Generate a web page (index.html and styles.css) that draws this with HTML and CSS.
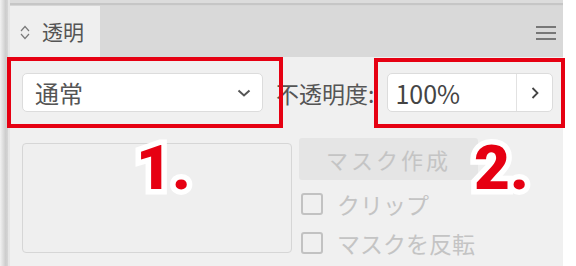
FILE: index.html
```html
<!DOCTYPE html>
<html lang="ja">
<head>
    <meta charset="UTF-8">
    <title>透明パネル</title>
    <link rel="stylesheet" href="styles.css">
</head>
<body>
    <div class="window">
        <div class="edge"></div>
        <div class="panel">
            <div class="topline"></div>
            <div class="tabbar">
                <div class="tab">
                    <svg class="tab-icon" width="10" height="15" viewBox="0 0 10 15">
                        <path d="M1 6 L5 1.5 L9 6" fill="none" stroke="#7a7a7a" stroke-width="1.2"/>
                        <path d="M1 9 L5 13.5 L9 9" fill="none" stroke="#7a7a7a" stroke-width="1.2"/>
                    </svg>
                    <span class="tab-title">透明</span>
                </div>
                <div class="menu">
                    <span></span><span></span><span></span>
                </div>
            </div>

            <div class="content">
                <div class="row-top">
                    <div class="select">
                        <span>通常</span>
                        <svg width="14" height="8" viewBox="0 0 14 8">
                            <path d="M1.5 1.5 L7 6.5 L12.5 1.5" fill="none" stroke="#555" stroke-width="2"/>
                        </svg>
                    </div>
                    <div class="label">不透明度:</div>
                    <div class="field">
                        <span class="value">100%</span>
                        <span class="step">
                            <svg width="8" height="12" viewBox="0 0 8 12">
                                <path d="M1.5 1 L6.5 6 L1.5 11" fill="none" stroke="#444" stroke-width="1.8"/>
                            </svg>
                        </span>
                    </div>
                </div>

                <div class="row-mask">
                    <div class="thumb"></div>
                    <div class="mask-col">
                        <div class="mask-btn">マスク作成</div>
                        <div class="check"><span class="box"></span>クリップ</div>
                        <div class="check"><span class="box"></span>マスクを反転</div>
                    </div>
                </div>
            </div>
        </div>

        <!-- annotations -->
        <div class="mark mark-1"></div>
        <div class="mark mark-2"></div>
        <div class="callout callout-1"><span class="outline">1.</span><span class="fill">1.</span></div>
        <div class="callout callout-2"><span class="outline">2.</span><span class="fill">2.</span></div>
    </div>
</body>
</html>
```

FILE: styles.css
```css
body {
    margin: 0;
    background: #ffffff;
    font-family: "Noto Sans CJK JP", "Noto Sans", sans-serif;
}

.window {
    position: relative;
    display: flex;
    width: 563px;
    height: 266px;
    overflow: visible;
}

.edge {
    width: 8px;
    background: linear-gradient(to right, #f2f2f2 0, #e2e2e2 30%, #cdcdcd 70%, #d6d6d6 100%);
}

.panel {
    flex: 1;
    display: flex;
    flex-direction: column;
    background: #f0f0f0;
    border-left: 2px solid #e6e6e6;
}

.topline {
    height: 6px;
    background: linear-gradient(to bottom, #dcdcdc 0, #dcdcdc 3px, #c6c6c6 3px, #c6c6c6 5px, #d6d6d6 5px);
}

.tabbar {
    height: 51px;
    display: flex;
    align-items: center;
    background: #d9d9d9;
}

.tab {
    align-self: stretch;
    width: 90px;
    display: flex;
    align-items: center;
    gap: 12px;
    padding-left: 10px;
    box-sizing: border-box;
    background: #efefef;
}

.tab-icon {
    margin-top: 2px;
}

.tab-title {
    font-size: 21px;
    color: #555;
    line-height: 1;
}

.menu {
    margin-left: auto;
    margin-right: 7px;
    display: flex;
    flex-direction: column;
    gap: 4px;
    margin-top: 2px;
}

.menu span {
    display: block;
    width: 20px;
    height: 2px;
    background: #777;
}

.content {
    padding: 16px 6px 0 12px;
}

.row-top {
    display: flex;
    align-items: center;
    height: 39px;
}

.select {
    width: 241px;
    height: 39px;
    box-sizing: border-box;
    display: flex;
    align-items: center;
    justify-content: space-between;
    padding: 0 11px 0 12px;
    background: #ffffff;
    border: 1px solid #dcdcdc;
    border-radius: 5px;
    font-size: 24px;
    color: #555;
}

.label {
    margin-left: 13px;
    font-size: 23px;
    color: #555;
    white-space: nowrap;
}

.field {
    margin-left: 13px;
    width: 166px;
    height: 39px;
    box-sizing: border-box;
    display: flex;
    background: #ffffff;
    border: 1px solid #dcdcdc;
    border-radius: 5px;
}

.value {
    flex: 1;
    display: flex;
    align-items: center;
    padding-left: 7px;
    font-size: 25px;
    color: #444;
}

.step {
    width: 35px;
    display: flex;
    align-items: center;
    justify-content: center;
    border-left: 1px solid #e2e2e2;
}

.row-mask {
    display: flex;
    align-items: flex-start;
    margin-top: 26px;
}

.thumb {
    width: 270px;
    height: 110px;
    margin-top: 5px;
    box-sizing: border-box;
    border: 1px solid #d6d6d6;
    border-radius: 4px;
    background: #efefef;
}

.mask-col {
    margin-left: 7px;
    display: flex;
    flex-direction: column;
}

.mask-btn {
    width: 179px;
    height: 42px;
    display: flex;
    align-items: center;
    justify-content: center;
    background: #e5e5e5;
    border-radius: 3px;
    font-size: 22px;
    letter-spacing: 3px;
    color: #c4c4c4;
}

.check {
    display: flex;
    align-items: center;
    gap: 14px;
    height: 22px;
    margin-top: 13px;
    padding-left: 2px;
    font-size: 23px;
    color: #c4c4c4;
}

.check + .check {
    margin-top: 17px;
}

.box {
    width: 22px;
    height: 22px;
    box-sizing: border-box;
    border: 2px solid #c2c2c2;
    border-radius: 3px;
}

.mark {
    position: absolute;
    box-sizing: border-box;
    border: 4px solid #e60012;
}

.mark-1 { left: 7px; top: 57px; width: 276px; height: 71px; }
.mark-2 { left: 374px; top: 58px; width: 191px; height: 70px; }

.callout {
    position: absolute;
    display: grid;
    font-family: Roboto, "Noto Sans", sans-serif;
    font-weight: 900;
    font-size: 62px;
    line-height: 1;
}

.callout span {
    grid-area: 1 / 1;
}

.callout .outline {
    color: #ffffff;
    -webkit-text-stroke: 11px #ffffff;
}

.callout .fill {
    color: #e60012;
}

.callout-1 { left: 136px; top: 137px; }
.callout-2 { left: 474px; top: 137px; }
```
